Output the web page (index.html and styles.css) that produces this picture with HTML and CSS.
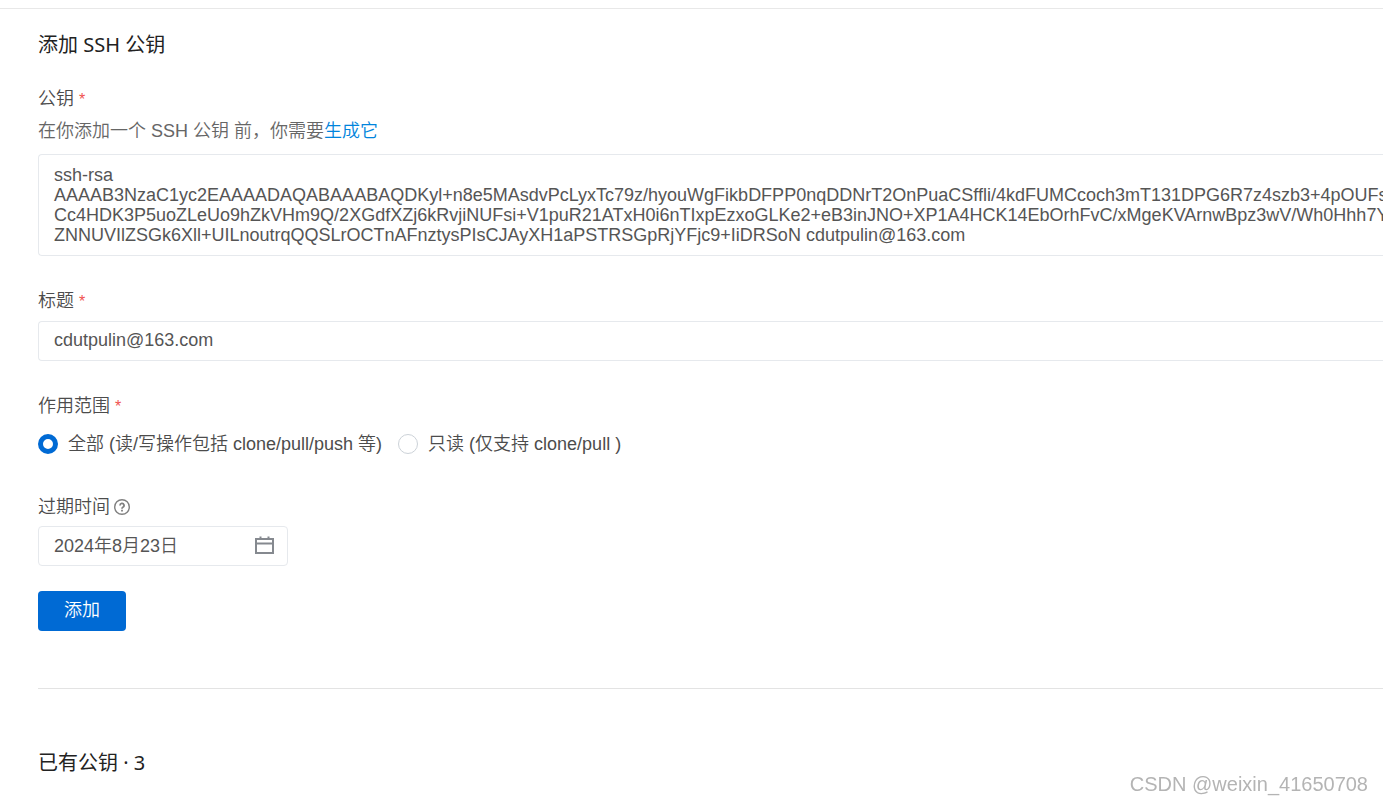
FILE: index.html
```html
<!DOCTYPE html>
<html lang="zh-CN">
<head>
<meta charset="utf-8">
<title>SSH 公钥</title>
<link rel="stylesheet" href="styles.css">
</head>
<body>
<main class="page">
  <form class="key-form">
    <h1 class="heading">添加 SSH 公钥</h1>

    <div class="field">
      <label class="label" for="key">公钥 <span class="required">*</span></label>
      <p class="hint">在你添加一个 SSH 公钥 前，你需要<a class="link" href="#">生成它</a></p>
      <textarea class="control control-area" id="key" rows="4" wrap="off" spellcheck="false">ssh-rsa
AAAAB3NzaC1yc2EAAAADAQABAAABAQDKyl+n8e5MAsdvPcLyxTc79z/hyouWgFikbDFPP0nqDDNrT2OnPuaCSffli/4kdFUMCcoch3mT131DPG6R7z4szb3+4pOUFsyJDV
Cc4HDK3P5uoZLeUo9hZkVHm9Q/2XGdfXZj6kRvjiNUFsi+V1puR21ATxH0i6nTIxpEzxoGLKe2+eB3inJNO+XP1A4HCK14EbOrhFvC/xMgeKVArnwBpz3wV/Wh0Hhh7YEpF
ZNNUVIlZSGk6Xll+UILnoutrqQQSLrOCTnAFnztysPIsCJAyXH1aPSTRSGpRjYFjc9+IiDRSoN cdutpulin@163.com</textarea>
    </div>

    <div class="field">
      <label class="label" for="title">标题 <span class="required">*</span></label>
      <input class="control control-line" id="title" type="text" value="cdutpulin@163.com">
    </div>

    <fieldset class="field scope">
      <legend class="label">作用范围 <span class="required">*</span></legend>
      <div class="options">
        <label class="option"><input class="radio" type="radio" name="scope" checked>全部 (读/写操作包括 clone/pull/push 等)</label>
        <label class="option"><input class="radio" type="radio" name="scope">只读 (仅支持 clone/pull )</label>
      </div>
    </fieldset>

    <div class="field field-date">
      <label class="label label-icon" for="expires">过期时间
        <svg class="help" viewBox="0 0 16 16" aria-hidden="true"><circle cx="8" cy="8" r="7.3"/><path class="help-mark" d="M6 6.400a2 2 0 1 1 2.900 1.800C8.200 8.600 8 8.800 8 9.700M8 10.800v1.600"/></svg>
      </label>
      <div class="date-box">
        <input class="date-input" id="expires" type="text" value="2024年8月23日">
        <svg class="calendar" viewBox="0 0 20 20" aria-hidden="true"><path d="M1 3h17v14H1zM1 7.500h17M5.500 0.500v3M13.500 0.500v3"/></svg>
      </div>
    </div>

    <button class="submit" type="submit">添加</button>
  </form>

  <section class="existing">
    <h2 class="heading">已有公钥 · 3</h2>
  </section>
</main>
<div class="watermark">CSDN @weixin_41650708</div>
</body>
</html>
```
FILE: styles.css
```css
* {
  box-sizing: border-box;
}

body {
  margin: 0;
  padding-top: 8px;
  overflow: hidden;
  background: #fff;
  color: #4c4c4c;
  font: 350 18px/24px "Liberation Sans", "Noto Sans CJK SC", sans-serif;
}

.page {
  border-top: 1px solid #e8e8e8;
  padding: 24px 0 24px 38px;
}

.heading {
  margin: 0;
  color: #222;
  font: 400 20px/24px "Noto Sans", "Noto Sans CJK SC", sans-serif;
}

.key-form {
  padding-bottom: 57px;
  border-bottom: 1px solid #e3e3e3;
}

.field {
  margin: 0 0 32px;
  padding: 0;
  border: 0;
}

.heading + .field {
  margin-top: 29px;
}

.scope {
  margin-bottom: 38px;
}

.label {
  display: block;
  padding: 1px 0 0;
  margin-bottom: 7px;
}

.scope .label {
  margin-bottom: 13px;
}

.required {
  color: #f0524f;
  font-size: 16px;
}

.hint {
  margin: 0 0 11px;
  color: #666;
}

.link {
  color: #0084dc;
  text-decoration: none;
}

.control {
  display: block;
  width: 100%;
  margin: 0;
  border: 1px solid #e6e9ed;
  border-right: 0;
  border-radius: 4px 0 0 4px;
  background: #fff;
  color: #555;
  font: inherit;
  outline: 0;
}

.control-area {
  padding: 10px 0 10px 15px;
  line-height: 20px;
  overflow: hidden;
  resize: none;
}

.control-line {
  height: 40px;
  padding: 0 0 2px 15px;
}

.options {
  display: flex;
  gap: 16px;
}

.option {
  display: flex;
  align-items: center;
  gap: 10px;
}

.radio {
  appearance: none;
  width: 20px;
  height: 20px;
  margin: 0;
  border: 1px solid #ccd2d8;
  border-radius: 50%;
  background: #fff;
}

.radio:checked {
  border: 5px solid #006ad4;
}

.label-icon {
  display: flex;
  align-items: center;
  gap: 4px;
}

.help {
  width: 16px;
  height: 16px;
  fill: none;
  stroke: #808080;
  stroke-width: 1.4;
}

.help-mark {
  stroke-width: 1.8;
}

.field-date {
  margin-bottom: 25px;
}

.date-box {
  display: flex;
  align-items: center;
  width: 250px;
  height: 40px;
  padding: 0 12px 0 15px;
  border: 1px solid #e6e9ed;
  border-radius: 4px;
}

.date-input {
  flex: 1;
  min-width: 0;
  padding: 0;
  border: 0;
  color: #555;
  font: inherit;
  outline: 0;
}

.calendar {
  width: 20px;
  height: 20px;
  fill: none;
  stroke: #85898f;
  stroke-width: 2;
}

.submit {
  display: block;
  width: 88px;
  height: 40px;
  padding: 0 0 2px;
  border: 0;
  border-radius: 4px;
  background: #006ad4;
  color: #fff;
  font: inherit;
}

.existing {
  padding-top: 62px;
}

.watermark {
  position: fixed;
  right: 15px;
  bottom: 7px;
  color: #b4b4b4;
  font-size: 20px;
}
```
